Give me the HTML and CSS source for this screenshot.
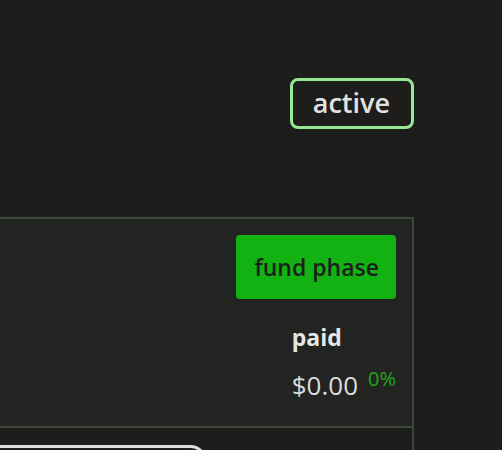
FILE: index.html
```html
<!DOCTYPE html>
<html lang="en">
<head>
    <meta charset="UTF-8">
    <meta name="viewport" content="width=device-width, initial-scale=1.0">
    <title>Campaign</title>
    <link rel="stylesheet" href="styles.css">
</head>
<body>
    <div class="page">
        <!-- Status -->
        <div class="status-bar">
            <span class="badge">active</span>
        </div>

        <!-- Campaign list -->
        <div class="panel">
            <div class="row">
                <div class="row-side">
                    <button class="phase-btn">fund phase</button>
                    <div class="stat">
                        <div class="stat-label">paid</div>
                        <div class="stat-value">$0.00<span class="stat-pct">0%</span></div>
                    </div>
                </div>
            </div>
            <div class="next">
                <div class="next-card"></div>
            </div>
        </div>
    </div>
</body>
</html>
```

FILE: styles.css
```css
body {
    margin: 0;
    padding: 0;
    background: #1d1e1c;
    color: #e4e4e4;
    font-family: "Open Sans", Arial, sans-serif;
    overflow: hidden;
}

.page {
    width: 434px;
    margin-left: -20px;
}

.status-bar {
    display: flex;
    justify-content: flex-end;
    padding-top: 78px;
}

.badge {
    display: inline-block;
    border: 3px solid #98e598;
    border-radius: 8px;
    padding: 0 21px 0 20px;
    height: 45px;
    line-height: 44px;
    font-size: 27px;
    font-weight: 600;
    color: #e2e2e2;
}

.panel {
    margin-top: 88px;
    border-top: 2px solid #3d473d;
    border-right: 2px solid #3d473d;
}

.row {
    display: flex;
    justify-content: flex-end;
    background: #222422;
    border-bottom: 2px solid #3d473d;
    padding: 16px 16px 23px;
}

.row-side {
    display: flex;
    flex-direction: column;
    align-items: flex-end;
}

.phase-btn {
    height: 64px;
    padding: 0 17px 0 18px;
    border: none;
    border-radius: 4px;
    background: #12b212;
    color: #1b1e1b;
    font-family: inherit;
    font-size: 23px;
    font-weight: 600;
}

.stat {
    margin-top: 23px;
}

.stat-label {
    font-size: 23px;
    font-weight: 700;
    line-height: 31px;
    color: #e6e6e6;
}

.stat-value {
    margin-top: 8px;
    font-size: 26px;
    line-height: 35px;
    color: #dcdcdc;
}

.stat-pct {
    margin-left: 10px;
    font-size: 20px;
    vertical-align: 9px;
    color: #1fa81f;
}

.next {
    padding-top: 17px;
}

.next-card {
    width: 222px;
    height: 60px;
    border: 3px solid #dedede;
    border-radius: 18px;
}
```
